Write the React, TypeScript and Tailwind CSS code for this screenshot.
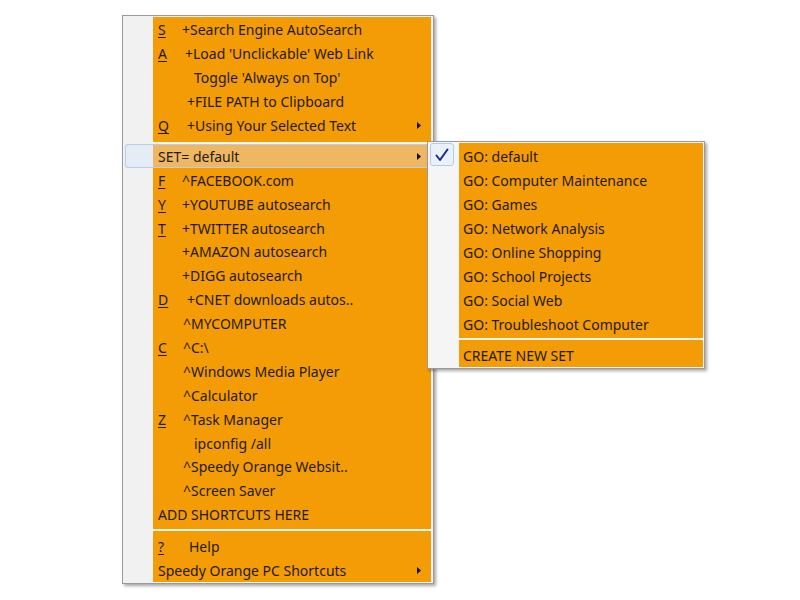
import React from 'react';

type Item = {
  key?: string;
  text: string;
  w?: string;
  arrow?: boolean;
  highlight?: boolean;
};

const sectionA: Item[] = [
  { key: 'S', text: '+Search Engine AutoSearch', w: 'w-[24px]' },
  { key: 'A', text: "+Load 'Unclickable' Web Link", w: 'w-[27px]' },
  { text: "Toggle 'Always on Top'", w: 'w-[36px]' },
  { text: '+FILE PATH to Clipboard', w: 'w-[29px]' },
  { key: 'Q', text: '+Using Your Selected Text', w: 'w-[29px]', arrow: true },
];

const sectionB: Item[] = [
  { text: 'SET= default', arrow: true, highlight: true },
  { key: 'F', text: '^FACEBOOK.com', w: 'w-[24px]' },
  { key: 'Y', text: '+YOUTUBE autosearch', w: 'w-[24px]' },
  { key: 'T', text: '+TWITTER autosearch', w: 'w-[24px]' },
  { text: '+AMAZON autosearch', w: 'w-[24px]' },
  { text: '+DIGG autosearch', w: 'w-[24px]' },
  { key: 'D', text: '+CNET downloads autos..', w: 'w-[29px]' },
  { text: '^MYCOMPUTER', w: 'w-[25px]' },
  { key: 'C', text: '^C:\\', w: 'w-[25px]' },
  { text: '^Windows Media Player', w: 'w-[25px]' },
  { text: '^Calculator', w: 'w-[25px]' },
  { key: 'Z', text: '^Task Manager', w: 'w-[25px]' },
  { text: 'ipconfig /all', w: 'w-[36px]' },
  { text: '^Speedy Orange Websit..', w: 'w-[25px]' },
  { text: '^Screen Saver', w: 'w-[25px]' },
  { text: 'ADD SHORTCUTS HERE' },
];

const sectionC: Item[] = [
  { key: '?', text: 'Help', w: 'w-[31px]' },
  { text: 'Speedy Orange PC Shortcuts', arrow: true },
];

const subItems = [
  'GO: default',
  'GO: Computer Maintenance',
  'GO: Games',
  'GO: Network Analysis',
  'GO: Online Shopping',
  'GO: School Projects',
  'GO: Social Web',
  'GO: Troubleshoot Computer',
];

function Arrow() {
  return (
    <svg width="4" height="7" viewBox="0 0 4 7" className="absolute right-[10px] top-[8.5px]">
      <path d="M0 0 L4 3.5 L0 7 Z" fill="#111" />
    </svg>
  );
}

function Row({ item }: { item: Item }) {
  const hl = !!item.highlight;
  return (
    <div className="relative flex h-[23.9px]">
      <div className="w-[29px] shrink-0 bg-[#f1f1f1]">
        {hl ? <div className="ml-[1px] h-full bg-[#e4ecf6]" /> : null}
      </div>
      <div
        className={`relative flex flex-1 items-center pl-[5px] ${hl ? 'bg-[#efb762]' : 'bg-[#f49c05]'}`}
      >
        {item.w ? (
          <span className={`${item.w} shrink-0`}>
            {item.key ? <span className="underline underline-offset-2">{item.key}</span> : null}
          </span>
        ) : null}
        <span className="whitespace-nowrap">{item.text}</span>
        {item.arrow ? <Arrow /> : null}
      </div>
      {hl ? (
        <div className="pointer-events-none absolute bottom-[0px] left-[1px] right-[0px] top-[0px] rounded-[3px] border border-[#b9cde6]" />
      ) : null}
    </div>
  );
}

function Separator() {
  return (
    <div className="flex h-[2px]">
      <div className="w-[29px] shrink-0 bg-[#f1f1f1]" />
      <div className="flex-1 bg-[#fbf6ee]" />
    </div>
  );
}

function Pad({ h }: { h: string }) {
  return (
    <div className={`flex ${h}`}>
      <div className="w-[29px] shrink-0 bg-[#f1f1f1]" />
      <div className="flex-1 bg-[#f49c05]" />
    </div>
  );
}

function SubPad({ h, sep }: { h: string; sep?: boolean }) {
  return (
    <div className={`flex ${h}`}>
      <div className="w-[30px] shrink-0 bg-[#f5f5f5]" />
      <div className={`flex-1 ${sep ? 'bg-[#fbf6ee]' : 'bg-[#f49c05]'}`} />
    </div>
  );
}

export default function App() {
  return (
    <div
      className="relative h-[600px] w-[800px] overflow-hidden bg-white text-[14px] text-[#1f1a12]"
      style={{ fontFamily: '"Noto Sans", "Open Sans", sans-serif' }}
    >
      <div className="ml-[122px] mt-[15px] w-[312px] border border-[#9a9a9a] bg-[#f1f1f1] pb-[1px] pl-[1px] pr-[2px] pt-[1px] shadow-[2px_2px_3px_rgba(0,0,0,0.35)]">
        <Pad h="h-[1px]" />
        {sectionA.map((it, i) => (
          <Row key={'a' + i} item={it} />
        ))}
        <Pad h="h-[5px]" />
        <Separator />
        {sectionB.map((it, i) => (
          <Row key={'b' + i} item={it} />
        ))}
        <Pad h="h-[2px]" />
        <Separator />
        <Pad h="h-[4px]" />
        {sectionC.map((it, i) => (
          <Row key={'c' + i} item={it} />
        ))}
      </div>

      {/* Submenu */}
      <div className="absolute left-[427px] top-[141px] w-[278px] border border-[#9a9a9a] bg-[#f5f5f5] p-[1px] shadow-[2px_2px_3px_rgba(0,0,0,0.35)]">
        <SubPad h="h-[2px]" />
        {subItems.map((t, i) => (
          <div key={t} className="relative flex h-[23.9px]">
            <div className="relative w-[30px] shrink-0 bg-[#f5f5f5]">
              {i === 0 ? (
                <div className="absolute left-[1px] top-[-2px] flex h-[23px] w-[24px] items-center justify-center rounded-[3px] border border-[#b4cbe6] bg-[#eaf1fa]">
                  <svg width="14" height="14" viewBox="0 0 14 14">
                    <path
                      d="M1.5 7.5 L5 12 L12.5 1.5"
                      fill="none"
                      stroke="#1b2a8e"
                      strokeWidth="2"
                      strokeLinecap="round"
                      strokeLinejoin="round"
                    />
                  </svg>
                </div>
              ) : null}
            </div>
            <div className="flex flex-1 items-center bg-[#f49c05] pl-[4px]">
              <span className="whitespace-nowrap">{t}</span>
            </div>
          </div>
        ))}
        <SubPad h="h-[2px]" />
        <SubPad h="h-[2px]" sep />
        <SubPad h="h-[3px]" />
        <div className="flex h-[24px]">
          <div className="w-[30px] shrink-0 bg-[#f5f5f5]" />
          <div className="flex flex-1 items-center bg-[#f49c05] pl-[4px]">
            <span className="whitespace-nowrap">CREATE NEW SET</span>
          </div>
        </div>
      </div>
    </div>
  );
}
